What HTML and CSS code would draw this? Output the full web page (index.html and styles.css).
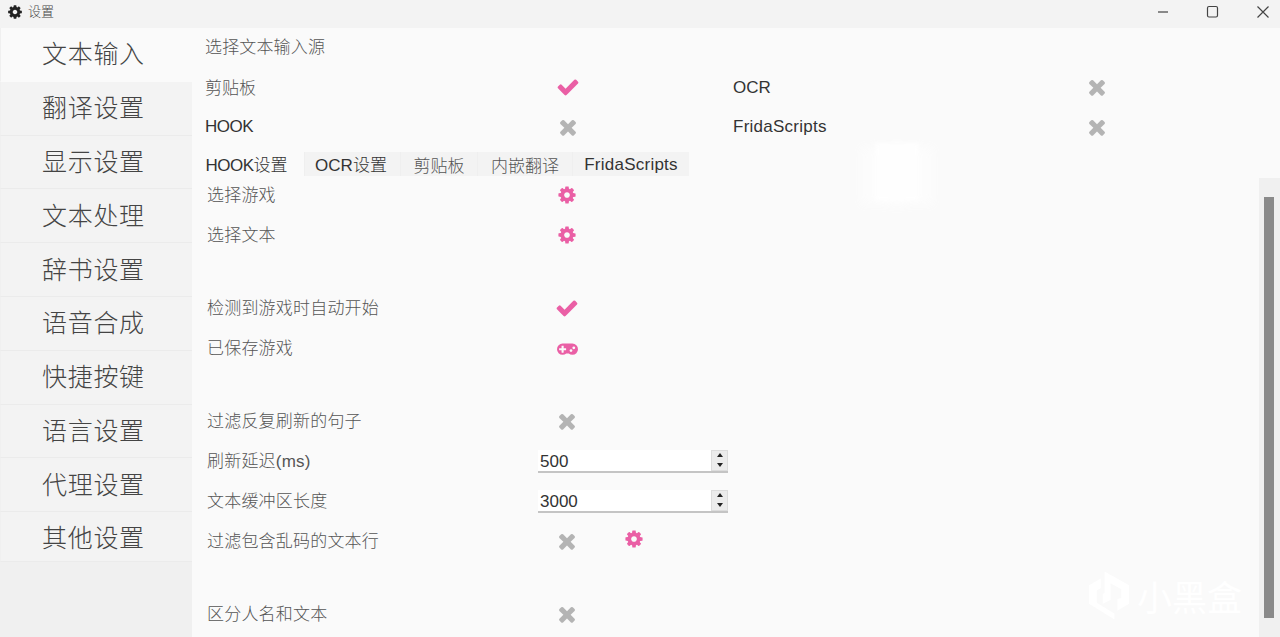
FILE: index.html
```html
<!DOCTYPE html>
<html lang="zh-CN">
<head>
    <meta charset="UTF-8">
    <meta name="viewport" content="width=device-width, initial-scale=1.0">
    <title>设置</title>
    <link rel="stylesheet" href="styles.css">
</head>
<body>
    <svg class="defs" aria-hidden="true">
        <symbol id="i-check" viewBox="0 0 1792 1792"><path d="M1671 566q0 40-28 68l-724 724-136 136q-28 28-68 28t-68-28l-136-136-362-362q-28-28-28-68t28-68l136-136q28-28 68-28t68 28l294 295 656-657q28-28 68-28t68 28l136 136q28 28 28 68z"/></symbol>
        <symbol id="i-times" viewBox="0 0 1792 1792"><path d="M1490 1322q0 40-28 68l-136 136q-28 28-68 28t-68-28l-294-294-294 294q-28 28-68 28t-68-28l-136-136q-28-28-28-68t28-68l294-294-294-294q-28-28-28-68t28-68l136-136q28-28 68-28t68 28l294 294 294-294q28-28 68-28t68 28l136 136q28 28 28 68t-28 68l-294 294 294 294q28 28 28 68z"/></symbol>
        <symbol id="i-cog" viewBox="0 0 1792 1792"><path d="M1152 896q0-106-75-181t-181-75-181 75-75 181 75 181 181 75 181-75 75-181zm512-109v222q0 12-8 23t-20 13l-185 28q-19 54-39 91 35 50 107 138 10 12 10 25t-9 23q-27 37-99 108t-94 71q-12 0-26-9l-138-108q-44 23-91 38-16 136-29 186-7 28-36 28h-222q-14 0-24.5-8.5t-11.5-21.5l-28-184q-49-16-90-37l-141 107q-10 9-25 9-14 0-25-11-126-114-165-168-7-10-7-23 0-12 8-23 15-21 51-66.5t54-70.5q-27-50-41-99l-183-27q-13-2-21-12.5t-8-23.5v-222q0-12 8-23t19-13l186-28q14-46 39-92-40-57-107-138-10-12-10-24 0-10 9-23 26-36 98.5-107.5t94.5-71.5q13 0 26 10l138 107q44-23 91-38 16-136 29-186 7-28 36-28h222q14 0 24.5 8.5t11.5 21.5l28 184q49 16 90 37l142-107q9-9 24-9 13 0 25 10 129 119 165 170 7 8 7 22 0 12-8 23-15 21-51 66.5t-54 70.5q26 50 41 98l183 28q13 2 21 12.5t8 23.5z"/></symbol>
        <symbol id="i-gamepad" viewBox="0 0 1920 1792"><path d="M832 1024v-128q0-14-9-23t-23-9h-192v-192q0-14-9-23t-23-9h-128q-14 0-23 9t-9 23v192h-192q-14 0-23 9t-9 23v128q0 14 9 23t23 9h192v192q0 14 9 23t23 9h128q14 0 23-9t9-23v-192h192q14 0 23-9t9-23zm576 64q0-53-37.5-90.5t-90.5-37.5-90.5 37.5-37.5 90.5 37.5 90.5 90.5 37.5 90.5-37.5 37.5-90.5zm256-256q0-53-37.5-90.5t-90.5-37.5-90.5 37.5-37.5 90.5 37.5 90.5 90.5 37.5 90.5-37.5 37.5-90.5zm256 128q0 212-150 362t-362 150q-192 0-338-128h-220q-146 128-338 128-212 0-362-150t-150-362 150-362 362-150h896q212 0 362 150t150 362z"/></symbol>
    </svg>

    <div class="titlebar">
        <div class="title">
            <svg class="title-icon"><use href="#i-cog"/></svg>
            <span>设置</span>
        </div>
        <div class="win-btns">
            <svg class="win-btn" viewBox="0 0 14 14"><path d="M2 7h10"/></svg>
            <svg class="win-btn" viewBox="0 0 14 14"><rect x="1.5" y="1.5" width="10" height="10.5" rx="1.5"/></svg>
            <svg class="win-btn" viewBox="0 0 14 14"><path d="M1.5 1.5l11 11M12.5 1.5l-11 11"/></svg>
        </div>
    </div>

    <div class="content">
        <div class="sidebar">
            <div class="side-item active">文本输入</div>
            <div class="side-item">翻译设置</div>
            <div class="side-item">显示设置</div>
            <div class="side-item">文本处理</div>
            <div class="side-item">辞书设置</div>
            <div class="side-item">语音合成</div>
            <div class="side-item">快捷按键</div>
            <div class="side-item">语言设置</div>
            <div class="side-item">代理设置</div>
            <div class="side-item">其他设置</div>
        </div>

        <div class="main">
            <div class="heading">选择文本输入源</div>
            <div class="sources">
                <div class="source">
                    <span class="source-label cjk">剪贴板</span>
                    <svg class="icon on"><use href="#i-check"/></svg>
                </div>
                <div class="source">
                    <span class="source-label latin far low">OCR</span>
                    <svg class="icon off"><use href="#i-times"/></svg>
                </div>
                <div class="source">
                    <span class="source-label latin tight">HOOK</span>
                    <svg class="icon off"><use href="#i-times"/></svg>
                </div>
                <div class="source">
                    <span class="source-label latin far wide">FridaScripts</span>
                    <svg class="icon off"><use href="#i-times"/></svg>
                </div>
            </div>

            <div class="tabs">
                <div class="tab current"><span><span class="tight">HOOK</span>设置</span></div>
                <div class="tab w-ocr">OCR设置</div>
                <div class="tab w-clip">剪贴板</div>
                <div class="tab w-embed">内嵌翻译</div>
                <div class="tab w-frida wide">FridaScripts</div>
            </div>

            <div class="panel">
                <div class="rows">
                    <div class="row">
                        <span class="row-label">选择游戏</span>
                        <span class="slot"><svg class="icon on cog"><use href="#i-cog"/></svg></span>
                    </div>
                    <div class="row">
                        <span class="row-label">选择文本</span>
                        <span class="slot"><svg class="icon on cog"><use href="#i-cog"/></svg></span>
                    </div>
                    <div class="spacer"></div>
                    <div class="row">
                        <span class="row-label">检测到游戏时自动开始</span>
                        <span class="slot"><svg class="icon on"><use href="#i-check"/></svg></span>
                    </div>
                    <div class="row">
                        <span class="row-label">已保存游戏</span>
                        <span class="slot"><svg class="icon on pad"><use href="#i-gamepad"/></svg></span>
                    </div>
                    <div class="spacer"></div>
                    <div class="row">
                        <span class="row-label">过滤反复刷新的句子</span>
                        <span class="slot"><svg class="icon off"><use href="#i-times"/></svg></span>
                    </div>
                    <div class="row">
                        <span class="row-label">刷新延迟(ms)</span>
                        <div class="spin">
                            <span class="spin-value">500</span>
                            <span class="spin-btns"><i class="up"></i><i class="down"></i></span>
                        </div>
                    </div>
                    <div class="row">
                        <span class="row-label">文本缓冲区长度</span>
                        <div class="spin">
                            <span class="spin-value">3000</span>
                            <span class="spin-btns"><i class="up"></i><i class="down"></i></span>
                        </div>
                    </div>
                    <div class="row">
                        <span class="row-label">过滤包含乱码的文本行</span>
                        <span class="slot"><svg class="icon off"><use href="#i-times"/></svg></span>
                        <span class="slot extra"><svg class="icon on cog"><use href="#i-cog"/></svg></span>
                    </div>
                    <div class="spacer"></div>
                    <div class="row">
                        <span class="row-label">区分人名和文本</span>
                        <span class="slot"><svg class="icon off"><use href="#i-times"/></svg></span>
                    </div>
                </div>
                <div class="scrollbar"><div class="thumb"></div></div>
            </div>
        </div>
    </div>

    <div class="smudge"></div>
    <div class="watermark">
        <svg class="wm-logo" viewBox="0 0 44 50">
            <path d="M0 14L12 7v10l-4 2v13l18 11v6L0 33z"/>
            <path d="M16 0l25 14v19l-12 7V28l4-1v-9L22 12v17l-8 4V23l2-1z"/>
        </svg>
        <span class="wm-text">小黑盒</span>
    </div>
</body>
</html>
```

FILE: styles.css
```css
/* page */
body {
    margin: 0;
    height: 637px;
    overflow: hidden;
    background-color: #fafafa;
    color: #555;
    font-family: "Liberation Sans", "Noto Sans CJK SC", sans-serif;
    font-size: 17px;
    font-weight: 300;
}

.defs {
    display: none;
}

/* title bar */
.titlebar {
    height: 28px;
    box-sizing: border-box;
    padding-bottom: 5px;
    display: flex;
    justify-content: space-between;
    align-items: center;
    background-color: #f3f3f3;
}

.title {
    display: flex;
    align-items: center;
    gap: 5px;
    padding-left: 7px;
    font-size: 13px;
    color: #444;
}

.title span {
    margin-bottom: 3px;
}

.title-icon {
    width: 16px;
    height: 16px;
    fill: #222;
}

.win-btns {
    display: flex;
    gap: 36px;
    padding-right: 10px;
}

.win-btn {
    width: 14px;
    height: 14px;
    fill: none;
    stroke: #444;
    stroke-width: 1.2;
}

.content {
    display: flex;
    height: 609px;
}

/* left menu */
.sidebar {
    width: 192px;
    flex-shrink: 0;
    background-color: #f0f0f0;
}

.side-item {
    height: 53.8px;
    box-sizing: border-box;
    padding-left: 41px;
    padding-bottom: 4px;
    display: flex;
    align-items: center;
    font-size: 25px;
    letter-spacing: 0.7px;
    color: #444;
    background-color: #f3f3f3;
    border-bottom: 1px solid #ebebeb;
    border-left: 1px solid #f0f0f0;
}

.side-item:last-child {
    height: 50px;
    padding-bottom: 1px;
}

.side-item.active {
    background-color: #fafafa;
    border-bottom-color: #fafafa;
}

/* right side */
.main {
    flex: 1;
    min-width: 0;
    display: flex;
    flex-direction: column;
}

.heading {
    height: 39px;
    padding-left: 13px;
    line-height: 39px;
    letter-spacing: 0.15px;
}

.sources {
    display: grid;
    grid-template-columns: 528px 528px;
    grid-auto-rows: 40px;
    padding-left: 13px;
}

.source {
    display: flex;
    align-items: center;
}

.source-label {
    width: 351px;
    flex-shrink: 0;
}

.source-label.cjk {
    padding-bottom: 2px;
}

.source-label.latin {
    color: #333;
}

.source-label.far {
    width: 352px;
}

.source-label.low {
    padding-top: 1px;
}

.tight {
    letter-spacing: -0.5px;
}

.wide {
    letter-spacing: 0.25px;
}

.icon {
    width: 24px;
    height: 24px;
}

.icon.on {
    fill: #ea5fa5;
}

.icon.off {
    fill: #b4b4b4;
}

.icon.cog {
    width: 20px;
    height: 20px;
    margin-bottom: 1px;
}

.icon.pad {
    width: 21px;
    height: 21px;
}

/* tabs */
.tabs {
    display: flex;
    align-items: flex-end;
    height: 26px;
    margin-top: 3px;
    padding-left: 2px;
    color: #333;
}

.tab {
    height: 24px;
    box-sizing: border-box;
    display: flex;
    align-items: center;
    justify-content: center;
    background-color: #f3f3f3;
    border-left: 1px solid #efefef;
}

.tab.current {
    width: 110px;
    height: 26px;
    padding-right: 5px;
    background-color: #fafafa;
    border-left: none;
}

.w-ocr {
    width: 96px;
    padding-right: 3px;
    padding-bottom: 1px;
}

.w-clip {
    width: 77px;
    color: #555;
}

.w-embed {
    width: 95px;
    color: #555;
}

.w-frida {
    width: 117px;
    padding-top: 2px;
}

/* panel under the tabs */
.panel {
    flex: 1;
    min-height: 0;
    display: flex;
}

.rows {
    flex: 1;
    margin-top: -1px;
    padding-left: 15px;
}

.row {
    height: 40px;
    display: flex;
    align-items: center;
}

.spacer {
    height: 33px;
}

.row-label {
    width: 331px;
    flex-shrink: 0;
    padding-bottom: 4px;
    letter-spacing: 0.2px;
}

.slot {
    width: 58px;
    display: flex;
    justify-content: center;
}

.slot.extra {
    margin-left: 9px;
    margin-bottom: 3px;
}

/* number box */
.spin {
    width: 190px;
    height: 23px;
    box-sizing: border-box;
    display: flex;
    justify-content: space-between;
    background-color: #fff;
    border-bottom: 2px solid #c4c4c4;
}

.spin-value {
    padding-left: 2px;
    line-height: 23px;
    color: #333;
}

.spin-btns {
    width: 17px;
    display: flex;
    flex-direction: column;
    background-color: #ececec;
    border: 1px solid #dcdcdc;
    box-sizing: border-box;
}

.spin-btns i {
    flex: 1;
    display: flex;
    align-items: center;
    justify-content: center;
}

.spin-btns i::before {
    content: "";
    border-left: 3.5px solid transparent;
    border-right: 3.5px solid transparent;
}

.spin-btns .up::before {
    border-bottom: 4px solid #222;
}

.spin-btns .down::before {
    border-top: 4px solid #222;
}

/* scrollbar */
.scrollbar {
    width: 21px;
    height: 459px;
    margin-top: 2px;
    box-sizing: border-box;
    padding: 19px 6px 19px 5px;
    background-color: #f0f0f0;
    flex-shrink: 0;
}

.thumb {
    height: 100%;
    background-color: #8a8a8a;
}

/* watermark pasted over the screenshot */
.smudge {
    position: absolute;
    left: 875px;
    top: 143px;
    width: 44px;
    height: 58px;
    background-color: #fff;
    opacity: 0.9;
    filter: blur(2px);
    box-shadow: 14px 4px 8px rgba(255, 255, 255, 0.5), -14px 4px 8px rgba(255, 255, 255, 0.5);
}

.watermark {
    position: absolute;
    left: 1089px;
    top: 570px;
    display: flex;
    align-items: center;
    gap: 5px;
}

.wm-logo {
    width: 43px;
    height: 50px;
    fill: #fff;
}

.wm-text {
    font-size: 35px;
    font-family: "Noto Sans CJK SC", sans-serif;
    font-weight: 400;
    color: #fff;
}
```
